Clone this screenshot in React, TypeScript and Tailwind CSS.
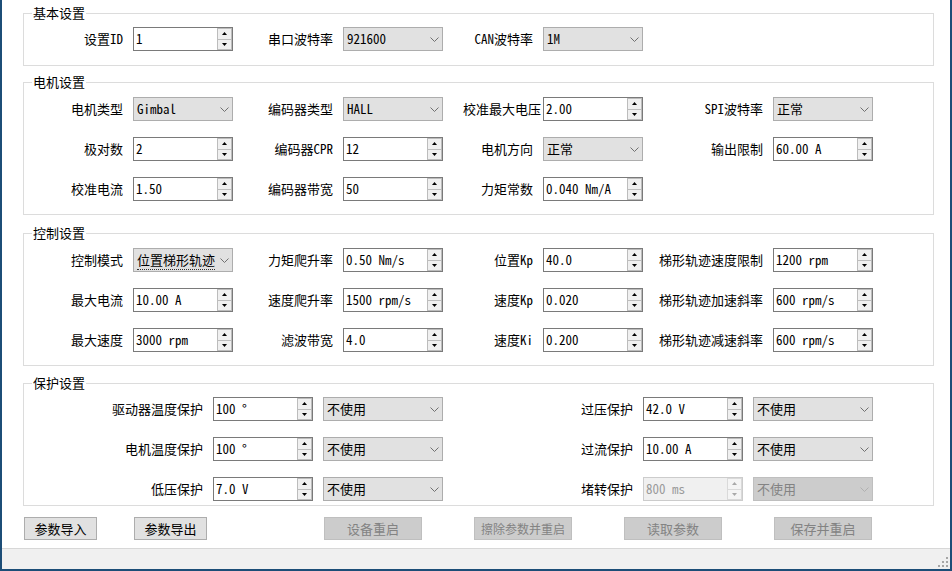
import type { ReactNode } from 'react';
import clsx from 'clsx';

const FONT = "font-['Noto_Sans_Mono_CJK_SC','Noto_Sans_CJK_SC',sans-serif]";

function Arrow({ up, color }: { up?: boolean; color: string }) {
  return (
    <svg width="5" height="3" viewBox="0 0 5 3" className="block">
      <path d={up ? 'M0 3 L2.5 0 L5 3 Z' : 'M0 0 L2.5 3 L5 0 Z'} fill={color} />
    </svg>
  );
}

function SpinBox({ value, disabled }: { value: string; disabled?: boolean }) {
  return (
    <div
      className={clsx(
        'flex h-[24px] w-[100px] items-center border',
        disabled ? 'border-[#cccccc] bg-[#f0f0f0] text-[#9a9a9a]' : 'border-[#7a7a7a] bg-white text-black',
      )}
    >
      <span className="min-w-0 flex-1 pl-[2px] leading-[20px] whitespace-pre">{value}</span>
      <div
        className={clsx(
          'flex h-[22px] w-[15px] shrink-0 flex-col border',
          disabled ? 'border-[#d9d9d9] bg-[#f4f4f4]' : 'border-[#bcbcbc] bg-[#f0f0f0]',
        )}
      >
        <div className="flex flex-1 items-center justify-center">
          <Arrow up color={disabled ? '#a8a8a8' : '#000'} />
        </div>
        <div className={clsx('flex flex-1 items-center justify-center border-t', disabled ? 'border-[#d9d9d9]' : 'border-[#bcbcbc]')}>
          <Arrow color={disabled ? '#a8a8a8' : '#000'} />
        </div>
      </div>
    </div>
  );
}

function Combo({
  value,
  wide,
  disabled,
  focused,
}: {
  value: string;
  wide?: boolean;
  disabled?: boolean;
  focused?: boolean;
}) {
  return (
    <div
      className={clsx(
        'flex h-[24px] items-center border pl-[3px] pr-[3px]',
        wide ? 'w-[120px]' : 'w-[100px]',
        disabled ? 'border-[#bfbfbf] bg-[#cccccc] text-[#838383]' : 'border-[#adadad] bg-[#e1e1e1] text-black',
      )}
    >
      <span className="min-w-0 flex-1 leading-[20px] whitespace-pre">
        <span className={clsx(focused && 'border-b border-dotted border-[#333]')}>{value}</span>
      </span>
      <svg width="9" height="5" viewBox="0 0 9 5" className="block shrink-0">
        <path d="M0.5 0.5 L4.5 4.5 L8.5 0.5" fill="none" stroke={disabled ? '#b0b0b0' : '#707070'} strokeWidth="1" />
      </svg>
    </div>
  );
}

function Label({ children, className }: { children: ReactNode; className?: string }) {
  return (
    <div className={clsx('flex items-center justify-end whitespace-nowrap leading-[20px]', className ?? 'pr-[10px]')}>
      {children}
    </div>
  );
}

function GroupBox({ title, className, children }: { title: string; className: string; children: ReactNode }) {
  return (
    <div className={clsx('relative ml-[21px] mr-[16px] shrink-0 border border-[#dcdcdc]', className)}>
      <span className="absolute left-[8px] top-[-9px] bg-white px-[1px] leading-[16px]">{title}</span>
      {children}
    </div>
  );
}

function Button({ children, width, disabled, className }: { children: ReactNode; width: string; disabled?: boolean; className?: string }) {
  return (
    <div
      className={clsx(
        'flex h-[23px] items-center justify-center border leading-[18px] whitespace-nowrap',
        width,
        disabled ? 'border-[#bfbfbf] bg-[#cccccc] text-[#838383]' : 'border-[#adadad] bg-[#e1e1e1] text-black',
        className,
      )}
    >
      {children}
    </div>
  );
}

const Empty = () => <div />;

export default function App() {
  return (
    <div
      className={`${FONT} flex h-[571px] w-[952px] flex-col border-x-2 border-b-2 border-[#1c4d77] bg-white text-[13px] text-black`}
    >
      {/* 基本设置 */}
      <GroupBox title="基本设置" className="mt-[13px] h-[53px] pt-[13px]">
        <div className="grid grid-cols-[109px_100px_110px_100px_100px_100px_130px_100px] gap-y-[16px]">
          <Label>设置ID</Label>
          <SpinBox value="1" />
          <Label>串口波特率</Label>
          <Combo value="921600" />
          <Label>CAN波特率</Label>
          <Combo value="1M" />
        </div>
      </GroupBox>

      {/* 电机设置 */}
      <GroupBox title="电机设置" className="mt-[16px] h-[133px] pt-[14px]">
        <div className="grid grid-cols-[109px_100px_110px_100px_100px_100px_130px_100px] gap-y-[16px]">
          <Label>电机类型</Label>
          <Combo value="Gimbal" />
          <Label>编码器类型</Label>
          <Combo value="HALL" />
          <Label className="pr-[2px]">校准最大电压</Label>
          <SpinBox value="2.00" />
          <Label>SPI波特率</Label>
          <Combo value="正常" />

          <Label>极对数</Label>
          <SpinBox value="2" />
          <Label>编码器CPR</Label>
          <SpinBox value="12" />
          <Label>电机方向</Label>
          <Combo value="正常" />
          <Label>输出限制</Label>
          <SpinBox value="60.00 A" />

          <Label>校准电流</Label>
          <SpinBox value="1.50" />
          <Label>编码器带宽</Label>
          <SpinBox value="50" />
          <Label>力矩常数</Label>
          <SpinBox value="0.040 Nm/A" />
          <Empty />
          <Empty />
        </div>
      </GroupBox>

      {/* 控制设置 */}
      <GroupBox title="控制设置" className="mt-[18px] h-[133px] pt-[14px]">
        <div className="grid grid-cols-[109px_100px_110px_100px_100px_100px_130px_100px] gap-y-[16px]">
          <Label>控制模式</Label>
          <Combo value="位置梯形轨迹" focused />
          <Label>力矩爬升率</Label>
          <SpinBox value="0.50 Nm/s" />
          <Label>位置Kp</Label>
          <SpinBox value="40.0" />
          <Label>梯形轨迹速度限制</Label>
          <SpinBox value="1200 rpm" />

          <Label>最大电流</Label>
          <SpinBox value="10.00 A" />
          <Label>速度爬升率</Label>
          <SpinBox value="1500 rpm/s" />
          <Label>速度Kp</Label>
          <SpinBox value="0.020" />
          <Label>梯形轨迹加速斜率</Label>
          <SpinBox value="600 rpm/s" />

          <Label>最大速度</Label>
          <SpinBox value="3000 rpm" />
          <Label>滤波带宽</Label>
          <SpinBox value="4.0" />
          <Label>速度Ki</Label>
          <SpinBox value="0.200" />
          <Label>梯形轨迹减速斜率</Label>
          <SpinBox value="600 rpm/s" />
        </div>
      </GroupBox>

      {/* 保护设置 */}
      <GroupBox title="保护设置" className="mt-[17px] h-[123px] pt-[13px]">
        <div className="grid grid-cols-[189px_100px_130px_200px_100px_130px] gap-y-[16px]">
          <Label>驱动器温度保护</Label>
          <SpinBox value="100 °" />
          <div className="pl-[10px]">
            <Combo value="不使用" wide />
          </div>
          <Label>过压保护</Label>
          <SpinBox value="42.0 V" />
          <div className="pl-[10px]">
            <Combo value="不使用" wide />
          </div>

          <Label>电机温度保护</Label>
          <SpinBox value="100 °" />
          <div className="pl-[10px]">
            <Combo value="不使用" wide />
          </div>
          <Label>过流保护</Label>
          <SpinBox value="10.00 A" />
          <div className="pl-[10px]">
            <Combo value="不使用" wide />
          </div>

          <Label>低压保护</Label>
          <SpinBox value="7.0 V" />
          <div className="pl-[10px]">
            <Combo value="不使用" wide />
          </div>
          <Label>堵转保护</Label>
          <SpinBox value="800 ms" disabled />
          <div className="pl-[10px]">
            <Combo value="不使用" wide disabled />
          </div>
        </div>
      </GroupBox>

      {/* 按钮 */}
      <div className="ml-[22px] mt-[11px] flex shrink-0">
        <Button width="w-[73px]">参数导入</Button>
        <Button width="w-[73px]" className="ml-[37px]">参数导出</Button>
        <Button width="w-[98px]" className="ml-[117px]" disabled>设备重启</Button>
        <Button width="w-[98px]" className="ml-[52px] text-[12px]" disabled>擦除参数并重启</Button>
        <Button width="w-[98px]" className="ml-[52px]" disabled>读取参数</Button>
        <Button width="w-[98px]" className="ml-[52px]" disabled>保存并重启</Button>
      </div>

      {/* 状态栏 */}
      <div className="mt-[8px] flex flex-1 items-end justify-end border-t border-[#d7d7d7] bg-[#f0f0f0]">
        <svg width="11" height="11" viewBox="0 0 11 11" className="mb-[1px] mr-[1px] block">
          <rect x="8" y="0" width="2" height="2" fill="#a6a6a6" />
          <rect x="4" y="4" width="2" height="2" fill="#a6a6a6" />
          <rect x="8" y="4" width="2" height="2" fill="#a6a6a6" />
          <rect x="0" y="8" width="2" height="2" fill="#a6a6a6" />
          <rect x="4" y="8" width="2" height="2" fill="#a6a6a6" />
          <rect x="8" y="8" width="2" height="2" fill="#a6a6a6" />
        </svg>
      </div>
    </div>
  );
}
